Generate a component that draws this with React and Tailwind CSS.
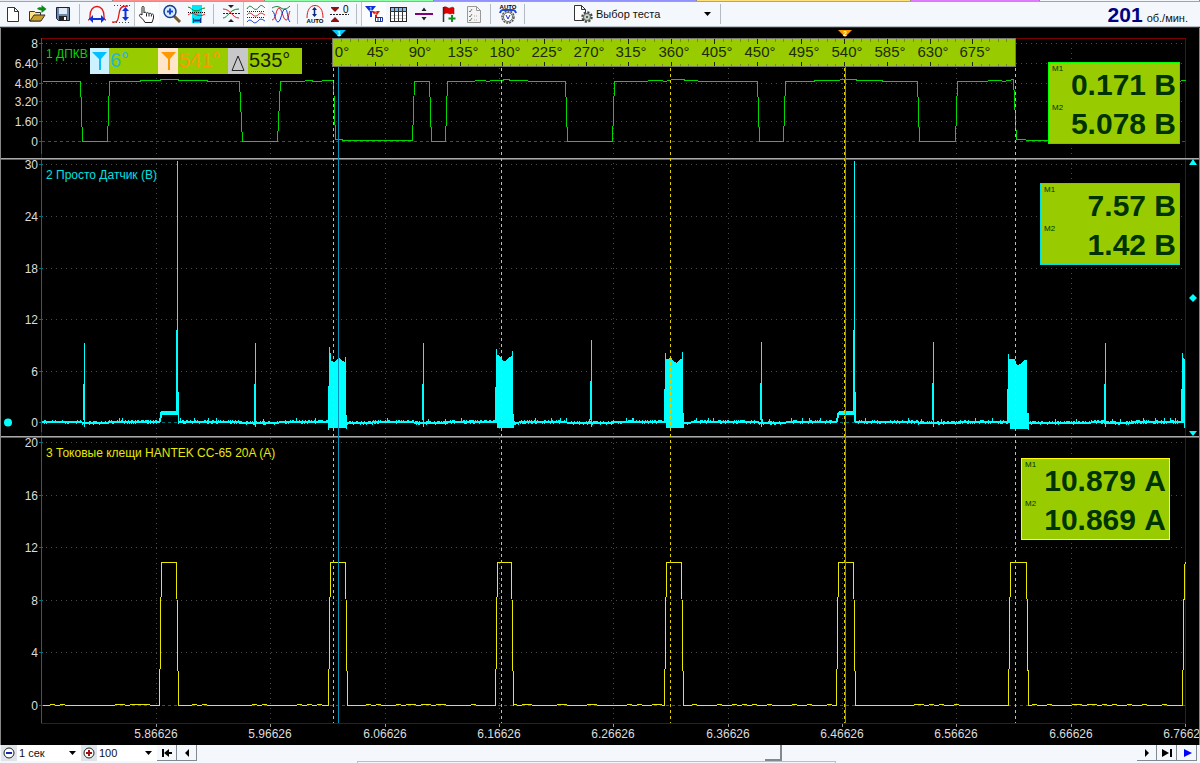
import React, { useState } from 'react';

const TABS = [
  { grow: 'grow-[113]', color: 'bg-[#e8ecf2]' },
  { grow: 'grow-[152]', color: 'bg-[#ff8f8f]' },
  { grow: 'grow-[169]', color: 'bg-[#8fffa8]' },
  { grow: 'grow-[263]', color: 'bg-[#9292ff]' },
  { grow: 'grow-[214]', color: 'bg-[#ffe07a]' },
  { grow: 'grow-[129]', color: 'bg-[#e07aff]' },
  { grow: 'grow-[160]', color: 'bg-[#f4f8fc]' },
];

const ICONS = {
  'New file': (
    <path d="M4.500 3.500h7l4 4v10h-11zM11.500 3.500v4h4" fill="#fff" stroke="#333" />
  ),
  'Open file': (
    <>
      <path d="M1.500 7.500h5l1 1h5v8.500h-11z" fill="#ffe28a" stroke="#333" />
      <path d="M2 17l4-6h11l-4 6z" fill="#c9a02c" stroke="#333" />
      <path d="M9 5c2-2.500 3-1.500 4.500-1.500V1l5 4-5 4V6.500C12 6 11 6 9 5z" fill="#0a8a1a" />
    </>
  ),
  Save: (
    <>
      <path d="M3.500 3.500h13v13h-11l-2-2z" fill="#7088a8" stroke="#14203c" />
      <rect x="6" y="4" width="8" height="6" fill="#dfe9f4" />
      <rect x="6" y="12" width="8" height="5" fill="#222" />
      <rect x="11" y="13" width="2" height="3" fill="#fff" />
    </>
  ),
  'Horizontal measure': (
    <>
      <path d="M1 16c2 0 2-2 2-4C3 6 6 2.500 10 2.500S17 6 17 12c0 2 0 4 2 4" fill="none" stroke="#e01818" strokeWidth="1.300" />
      <path d="M4 15h12" stroke="#1030d8" strokeWidth="2" />
      <path d="M6 11v8l-4-4zM14 11v8l4-4z" fill="#1030d8" />
    </>
  ),
  'Vertical measure': (
    <>
      <path d="M2 1.500h16M1 18.500h16" stroke="#444" strokeDasharray="1 2" />
      <path d="M0 18c6 1 6-2 7-8 1-7 3-8 9-8" fill="none" stroke="#e01818" strokeWidth="1.300" />
      <path d="M13.500 5v10" stroke="#1030d8" strokeWidth="2" />
      <path d="M10 7h7l-3.500-4zM10 13h7l-3.500 4z" fill="#1030d8" />
    </>
  ),
  Hand: (
    <path
      d="M5 11V3.500c0-1.500 2-1.500 2 0V9c.500-1.200 2.300-1 2.500.3.500-1 2.200-.8 2.500.5.600-.9 2.200-.6 2.400.5.700-.7 2.100-.2 2.100 1V14l-1.500 4.500H8L6.500 16 3 12.500c-1.300-1.300-.2-2.700 1-2.200zM9.500 9.500v3M12 10v2.500M14.400 10.500v2"
      fill="#fff"
      stroke="#222"
    />
  ),
  'Zoom in': (
    <>
      <path d="M12 12l6 6" stroke="#7a5a28" strokeWidth="3" />
      <circle cx="8" cy="7.500" r="6" fill="#d8ecff" stroke="#183c90" strokeWidth="1.500" />
      <path d="M8 4.500v6M5 7.500h6" stroke="#1848d0" strokeWidth="2" />
    </>
  ),
  'Fit window': (
    <>
      <rect x="5" y="1" width="10" height="18" fill="#00e8f8" />
      <path d="M1 3c3 0 4 4 8 4s5-3 9-3" fill="none" stroke="#108010" />
      <path d="M1 8.500h18" stroke="#000" strokeDasharray="1 1" />
      <path d="M1 11c4-3 6-1 9 0s5 1 8-1" fill="none" stroke="#e01818" />
      <path d="M6 16.500h8" stroke="#103090" strokeWidth="2" />
      <path d="M6.500 14v5M13.500 14v5" stroke="#103090" />
    </>
  ),
  'Zero align': (
    <>
      <path d="M2 9.500h17" stroke="#222" strokeDasharray="2 1" />
      <path d="M2 14c5 0 6-9 16-9" fill="none" stroke="#108030" />
      <path d="M2 5c8 0 9 9 16 9" fill="none" stroke="#e01818" />
      <path d="M7 1h6l-3 3zM7 18h6l-3-3z" fill="#222" />
    </>
  ),
  'Separate channels': (
    <>
      <path d="M1 5c2-4 4-3 6-1s4 2 6-1 4-1 6 1" fill="none" stroke="#108030" />
      <path d="M1 7.500h18M1 13.500h18" stroke="#222" strokeDasharray="1 1" />
      <path d="M1 11c2-3 4-2 6 0s4 1 6-1 4 0 6 1" fill="none" stroke="#e01818" />
      <path d="M1 18c2-3 4-2 6 0s4 0 6-2 4 0 6 1" fill="none" stroke="#1030d8" />
    </>
  ),
  'Overlay channels': (
    <>
      <path d="M1 4c4-2 6-2 9 0s6 1 9-2" fill="none" stroke="#108030" />
      <path d="M1 16C5 16 5 4 8 4s4 12 7 12 2-5 4-9" fill="none" stroke="#e01818" />
      <path d="M1 7c3 0 3 11 6 11S11 5 14 5s2 10 5 13" fill="none" stroke="#1030d8" />
    </>
  ),
  'Auto scale': (
    <>
      <path d="M2 14C2 6 5 1.500 10 1.500S18 6 18 14" fill="none" stroke="#e01818" />
      <path d="M9.500 4v8" stroke="#102880" strokeWidth="1.500" />
      <path d="M7 6h5L9.500 3zM7 10h5l-2.500 3z" fill="#102880" />
      <text x="10" y="19" textAnchor="middle" className="text-[6px] font-bold">AUTO</text>
    </>
  ),
  'Set zero': (
    <>
      <path d="M1 4h8l-4 4zM1 17h8l-4-4z" fill="#901010" />
      <path d="M1 3.500h8M1 17.500h8" stroke="#901010" />
      <path d="M0 10.500h19" stroke="#222" strokeDasharray="2 1" />
      <text x="13" y="9" className="text-[10px]">0</text>
    </>
  ),
  Rulers: (
    <>
      <path d="M1 2h11l-4 5v6H6V8z" fill="#1030d8" />
      <text x="5" y="7" fill="#fff" className="text-[6px]">1</text>
      <path d="M7 7h9l-3 4v5h-2v-5z" fill="#e01818" />
      <text x="10" y="11" fill="#fff" className="text-[5px]">2</text>
      <path d="M11.500 13.500h7v4h-7zM14 13.500v4M16.500 13.500v4" fill="#fff" stroke="#1830a0" />
    </>
  ),
  'Data table': (
    <>
      <rect x="1.500" y="3.500" width="16" height="14" fill="#fff" stroke="#222" />
      <path d="M2 5.500h15" stroke="#88b8e8" strokeWidth="3" />
      <path d="M2 11.500h15M2 14.500h15" stroke="#ccc" />
      <path d="M1 7.500h17M5.500 4v14M9.500 4v14M13.500 4v14" stroke="#333" />
    </>
  ),
  'Split panel': (
    <>
      <path d="M1 10h18" stroke="#800080" strokeWidth="2" />
      <path d="M7.500 7h5L10 3.500zM7.500 13h5L10 16.500z" fill="#222" />
    </>
  ),
  'Add flag': (
    <>
      <path d="M4.500 3v15" stroke="#333" strokeWidth="1.500" />
      <path d="M5 3c3-1 4 2 6 1s3-1 4 0v6c-2-1-3 0-4 0s-3-2-6 0z" fill="#e00000" stroke="#600" strokeWidth=".5" />
      <path d="M13 11v7M9.500 14.500h7" stroke="#109020" strokeWidth="2" />
    </>
  ),
  Checklist: (
    <>
      <path d="M3.500 2.500h9l4 4v12h-13zM12.500 2.500v4h4" fill="#f4f4f4" stroke="#999" />
      <path d="M5 7l1 1 2-3M5 12l1 1 2-3M5 16l1 1 2-3" fill="none" stroke="#777" />
      <path d="M10 12h4M10 16h4" stroke="#aaa" strokeDasharray="1 1" />
    </>
  ),
  'Auto time': (
    <>
      <text x="10" y="5" textAnchor="middle" className="text-[6px] font-bold">AUTO</text>
      <path d="M2 9c1-4 4-3 8-3s7-1 8 3" fill="none" stroke="#1848e0" strokeWidth="2" />
      <circle cx="10" cy="13" r="6" fill="#ddd" stroke="#555" strokeWidth="1.500" strokeDasharray="2 1" />
      <circle cx="10" cy="13" r="4.500" fill="#fff" stroke="#666" />
      <path d="M8 11l2 4 2-4" fill="none" stroke="#1830d0" />
    </>
  ),
};

const GROUPS = [
  ['New file', 'Open file', 'Save'],
  ['Horizontal measure', 'Vertical measure', 'Hand', 'Zoom in', 'Fit window'],
  ['Zero align', 'Separate channels', 'Overlay channels'],
  ['Auto scale', 'Set zero'],
  ['Rulers', 'Data table', 'Split panel', 'Add flag', 'Checklist'],
  ['Auto time'],
];

const ACTIVE = ['Hand', 'Separate channels', 'Rulers'];

const Separator = () => <div className="mx-1 h-5 w-px bg-[#b4bac2]" />;

const Toolbar = () => (
  <div className="flex h-[25px] items-center border-b border-[#b8bec6] bg-[#f4f8fc]">
    {GROUPS.map((group) => (
      <React.Fragment key={group[0]}>
        {group.map((name) => (
          <button
            key={name}
            type="button"
            aria-label={name}
            className={`flex h-6 w-[25px] shrink-0 items-center justify-center ${
              ACTIVE.includes(name) ? 'border-l border-[#c0c4ca] bg-[#fbfcfe]' : ''
            }`}
          >
            <svg viewBox="0 0 20 20" className="size-5">{ICONS[name]}</svg>
          </button>
        ))}
        <Separator />
      </React.Fragment>
    ))}
    <label className="ml-10 flex items-center gap-[3px] pl-1">
      <svg viewBox="0 0 20 20" className="size-5">
        <path d="M1.500 1.500h7l4 4v11h-11zM8.500 1.500v4h4" fill="#fff" stroke="#333" />
        <circle cx="14" cy="13" r="4.500" fill="#c8d4c4" stroke="#444" strokeWidth="2.500" strokeDasharray="2 1.500" />
        <circle cx="14" cy="13" r="3.500" fill="#c8d4c4" stroke="#566" />
        <circle cx="14" cy="13" r="1" fill="#333" />
      </svg>
      <Dropdown label="Выбор теста" options={['Выбор теста']} className="w-[120px]" />
    </label>
    <Separator />
    <div className="ml-auto flex items-baseline gap-1 pr-3 pt-1 leading-6 text-[#111]">
      <span className="text-[21px] font-bold text-[#000080]">201</span>
      <span className="text-[11px]">об./мин.</span>
    </div>
  </div>
);

const Dropdown = ({ label, options, className }) => (
  <span className={`relative flex items-center ${className}`}>
    <select aria-label={label} className="w-full appearance-none bg-transparent text-[11px] leading-4 text-[#111] outline-none">
      {options.map((o) => <option key={o}>{o}</option>)}
    </select>
    <svg viewBox="0 0 8 4" className="pointer-events-none absolute right-1 h-1 w-2">
      <path d="M0 0h7L3.500 4z" fill="#000" />
    </svg>
  </span>
);

const GRID_X = [156, 270, 385, 499, 613, 728, 842, 956, 1071, 1185];
const TIMES = ['5.86626', '5.96626', '6.06626', '6.16626', '6.26626', '6.36626', '6.46626', '6.56626', '6.66626', '6.76626'];

const AXES = [
  [[43, '8'], [63, '6.40'], [83, '4.80'], [101, '3.20'], [121, '1.60'], [141, '0']],
  [[164, '30'], [216, '24'], [268, '18'], [319, '12'], [371, '6'], [422, '0']],
  [[442, '20'], [495, '16'], [547, '12'], [600, '8'], [652, '4'], [705, '0']],
];

// pseudo random, so the noise stays the same between renders
const noise = (x) => {
  const v = Math.sin(x * 12.9898) * 43758.5453;
  return v - Math.floor(v);
};

const CRANK =
  'M42 81H80L82 141H107L109 81H139L141 80H158L162 79H176L180 80H205L209 81H239L242 141H277L280 81H303L306 80H310L314 81H318L325 80H333' +
  'L335 139H341L343 140H412L414 81H429L431 141H445L447 81H473L476 80H484L487 81L492 80H500L506 79L512 80H525L530 81H565L567 141H612L614 81H645L650 80H660' +
  'L665 81L672 79H682L686 80H695L700 81H757L759 141H783L785 81H812L816 80H835L845 79H854L858 80H880L884 81H917L919 141H955L957 81H985L990 80H1000L1003 81L1013 79' +
  'L1016 139H1023L1028 140H1050L1100 141L1102 81H1179L1182 80H1185';

const SPIKES = [[84, 343], [255, 343], [423, 343], [591, 340], [761, 342], [933, 342], [1105, 343]];

const BURSTS = [
  'M328 430V386H329V347H330V353H331V361L334 362L337 359L339 358L342 361L345 362V357H346V415H347V430L346 429V428H329V430z',
  'M495 422V387H496V349H497V355L500 356L503 361L506 361L509 357L512 356V351H513V414H514V428H497V422z',
  'M664 422V389H665V353H666V359L668 359L671 357L674 362L677 363L680 359H682V352H683V413H684V428H666V422z',
  'M1007 422V389H1008V354H1009V359H1015L1017 365L1021 364L1024 360H1027V413H1029V430L1027 429H1010V422z',
  'M1181 422V389H1182V353H1183V358L1185 359V428H1184V422z',
];

const SAGS = [[82, 108], [240, 278], [336, 372], [414, 447], [513, 518], [567, 612], [683, 690], [758, 785], [918, 957], [1029, 1090], [1105, 1130]];

const sensorBaseline = () => {
  const parts = [];
  for (let x = 42; x < 1185; x += 1) {
    if ((x >= 160 && x < 178) || (x >= 837 && x < 855)) continue;
    const sag = SAGS.some(([a, b]) => x >= a && x <= b) ? 1 : 0;
    const n = noise(x);
    const top = 420 + sag + (n > 0.6 ? 0 : 1) - (n > 0.95 ? 2 : 0);
    parts.push(`M${x}.5 ${top}V${423 + sag + (noise(x + 0.5) > 0.8 ? 1 : 0)}`);
  }
  return parts.join('');
};

const PULSES = [[159, 161, 176, 178], [328, 330, 345, 347], [495, 497, 511, 513], [664, 666, 681, 683], [836, 838, 853, 855], [1008, 1010, 1026, 1028]];

const clampTrace = () => {
  let d = 'M42 705';
  let x = 42;
  const flat = (to) => {
    for (; x < to; x += 5) {
      d += `L${x} ${noise(x) > 0.7 ? 704 : 705}`;
    }
  };
  PULSES.forEach(([a, b, c, e]) => {
    flat(a);
    d += `L${a} 705L${b} 562H${c}L${e} 705`;
    x = e + 1;
  });
  flat(1182);
  return `${d}L1182 705L1184 565L1185 562`;
};

const RULER_X = [333, 375, 417, 460, 502, 544, 586, 628, 671, 714, 757, 801, 844, 887, 930, 972, 1015];

const Ruler = () => (
  <g>
    <rect x="332.5" y="38.5" width="683" height="28" fill="#99cc00" stroke="#77776a" />
    {RULER_X.slice(0, 16).map((x, i) => {
      const step = (RULER_X[i + 1] - x) / 5;
      return (
        <g key={x}>
          {i > 0 && <path d={`M${x}.5 39v5M${x}.5 62v4`} stroke="#1c2a00" />}
          {[1, 2, 3, 4].map((k) => {
            const mx = Math.round(x + step * k) + 0.5;
            return <path key={k} d={`M${mx} 39v3M${mx} 64v2`} stroke="#6f9210" />;
          })}
          <text x={i === 0 ? 342 : x + 3} y="57" textAnchor="middle" fill="#1c2a00" className="text-[15px]">
            {i * 45}°
          </text>
        </g>
      );
    })}
  </g>
);

const Chart = () => (
  <svg viewBox="0 28 1200 717" className="block h-auto w-full" role="img" aria-label="Осциллограмма" shapeRendering="crispEdges">
    <rect x="0" y="28" width="1200" height="717" fill="#000" />

    {/* grid */}
    <g stroke="#4a4a4a" strokeDasharray="1 4">
      {AXES.flat().map(([y, label]) => label !== '0' && <path key={y} d={`M46 ${y}.5H1185`} />)}
      {GRID_X.slice(0, 9).map((x) => <path key={x} d={`M${x}.5 43V723`} />)}
    </g>
    <g stroke="#006a70" strokeDasharray="3 3">
      {[141, 422, 705].map((y) => <path key={y} d={`M42 ${y}.5H1185`} />)}
    </g>
    <path d="M41 38.500H1185.500V723.500H41" fill="none" stroke="#780000" />
    <path d="M41.500 38V723" stroke="#00707c" />
    <path d="M41.500 154V158M41.500 432V436" stroke="#780000" />

    {/* axis labels */}
    <g fill="#dcdcdc" className="text-[12px]">
      {AXES.flat().map(([y, label]) => (
        <g key={y}>
          <text x="38" y={y + 5} textAnchor="end">{label}</text>
          <path d={`M39 ${y}.5h4`} stroke="#00707c" />
        </g>
      ))}
      {GRID_X.map((x, i) => (
        <g key={x}>
          <text x={x} y="738" textAnchor="middle">{TIMES[i]}</text>
          <path d={`M${x}.5 724v3`} stroke="#999" />
        </g>
      ))}
    </g>

    {/* traces */}
    <path d={CRANK} transform="translate(.5 .5)" fill="none" stroke="#00d800" />
    <g fill="#00ffff" stroke="none">
      <path d={sensorBaseline()} stroke="#00ffff" />
      <path d="M159 423L160 413L161 411H176V330H177V161H178V392H179V422H178V415H162L161 422z" />
      <path d="M836 423L837 413L839 411H853V330H854V161H855V392H856V422H854V415H839L838 422z" />
      {SPIKES.map(([x, top]) => (
        <g key={x}>
          <rect x={x} y={top} width="1" height={427 - top} />
          <rect x={x - 1} y={top + 41} width="1" height={420 - top - 41} />
        </g>
      ))}
      {BURSTS.map((d) => <path key={d} d={d} />)}
    </g>
    <path d={clampTrace()} transform="translate(.5 .5)" fill="none" stroke="#e8e800" />

    {/* panel borders */}
    {[158, 436].map((y) => (
      <g key={y}>
        <path d={`M0 ${y}.5H1200`} stroke="#a8a8a8" />
        <path d={`M0 ${y + 1}.5H1200`} stroke="#606060" />
      </g>
    ))}

    {/* cursors */}
    <g stroke="#e0d000" strokeDasharray="3 3">
      {[333, 501, 670, 844, 1015].map((x) => <path key={x} d={`M${x}.5 38V723`} />)}
    </g>
    <path d="M338.500 38V723" stroke="#0090b8" />
    <path d="M845.500 38V723" stroke="#c87800" />
    <Ruler />
    <g shapeRendering="auto">
      <path d="M332 30h14l-7 7z" fill="#00c8ff" />
      <path d="M838 30h14l-7 7z" fill="#ff9800" />
      <text x="337" y="36" fill="#fff" className="text-[7px] font-bold">1</text>
      <text x="843" y="36" fill="#fff" className="text-[7px] font-bold">2</text>
      <g fill="#00ffff">
        <circle cx="8" cy="422.5" r="4" />
        <path d="M1189 165h8l-4-6z" />
        <path d="M1189 298l4-4 4 4-4 4z" />
        <path d="M1189 431h8l-4 5z" />
      </g>
    </g>

    {/* channel names */}
    <g className="text-[12px]">
      <text x="46" y="58" fill="#00d800">1 ДПКВ</text>
      <text x="46" y="179" fill="#00e0e0">2 Просто Датчик (В)</text>
      <text x="46" y="457" fill="#e8e800">3 Токовые клещи HANTEK CC-65 20A (A)</text>
    </g>
    <path d="M.5 28V745" stroke="#888" />
    <path d="M1199.500 28V745" stroke="#888" />
  </svg>
);

const AnglePanel = () => (
  <div className="absolute left-[90px] top-5 flex h-[26px] bg-[#99cc00] text-[20px] leading-6">
    <svg viewBox="0 0 19 26" className="w-[19px] bg-[#ccf2ff]">
      <path d="M2 4h15l-6 7v11H9V11z" fill="#00c0ff" />
    </svg>
    <span className="w-[49px] pl-px text-[#20b8d8]">6°</span>
    <svg viewBox="0 0 20 26" className="w-5 bg-[#ffe6c8]">
      <path d="M3 4h15l-6 7v11h-2V11z" fill="#ff9800" />
    </svg>
    <span className="w-[50px] pl-px text-[#ff9800]">541°</span>
    <svg viewBox="0 0 20 26" className="w-5 bg-[#c8c8c8]">
      <path d="M4 22.500L10 8l6 14.500z" fill="none" stroke="#222" />
    </svg>
    <span className="w-[54px] pl-px text-[#141e00]">535°</span>
  </div>
);

const Readout = ({ m1, m2, className }) => (
  <div className={`absolute border bg-[#99cc00] pt-0.5 text-[#003300] ${className}`}>
    {[['M1', m1], ['M2', m2]].map(([name, value]) => (
      <div key={name} className="flex justify-between px-[3px]">
        <span className="text-[8px] leading-[8px]">{name}</span>
        <span className="text-[30px] font-bold leading-[39px]">{value}</span>
      </div>
    ))}
  </div>
);

const NavButton = ({ label, path, color = '#000' }) => (
  <button
    type="button"
    aria-label={label}
    className="flex h-4 w-5 items-center justify-center border-b border-r border-[#808890] bg-[#f4f8fc]"
  >
    <svg viewBox="0 0 10 8" className="h-2 w-2.5"><path d={path} fill={color} /></svg>
  </button>
);

const ScaleButton = ({ label, path, color }) => (
  <button type="button" aria-label={label} className="flex h-4 w-4 items-center justify-center bg-[#dfe4ea]">
    <svg viewBox="0 0 12 12" className="size-3">
      <circle cx="6" cy="6" r="5" fill="#fff" stroke="#222" />
      <path d={path} stroke={color} strokeWidth="2" />
    </svg>
  </button>
);

const BottomBar = () => {
  const [position, setPosition] = useState(615);

  return (
    <div className="flex h-[18px] items-start bg-[#f4f8fc] pl-px pr-[3px]">
      <ScaleButton label="Уменьшить" path="M3 6h6" color="#1828b0" />
      <Dropdown label="Время" options={['1 сек']} className="h-4 w-16 bg-white pl-0.5" />
      <ScaleButton label="Увеличить" path="M3 6h6M6 3v6" color="#a01010" />
      <Dropdown label="Масштаб" options={['100']} className="h-4 w-[60px] bg-white pl-0.5" />
      <NavButton label="В начало" path="M0 0h2v8H0zM2 4l5-4v3h3v2H7v3z" />
      <NavButton label="Назад" path="M3 4l4-4v8z" />
      <div className="grow">
        <input
          type="range"
          aria-label="Позиция"
          min="0"
          max="1000"
          value={position}
          onChange={(e) => setPosition(Number(e.target.value))}
          className="block h-4 w-full appearance-none bg-transparent [&::-webkit-slider-thumb]:h-4 [&::-webkit-slider-thumb]:w-[17px] [&::-webkit-slider-thumb]:appearance-none [&::-webkit-slider-thumb]:border-b-2 [&::-webkit-slider-thumb]:border-r-2 [&::-webkit-slider-thumb]:border-[#808890] [&::-webkit-slider-thumb]:bg-[#f4f8fc]"
        />
        <div className="ml-[17%] h-0.5 w-[51%] border-x border-t border-[#b8bec6]" />
      </div>
      <NavButton label="Вперёд" path="M3 0l4 4-4 4z" />
      <NavButton label="В конец" path="M0 0l7 4-7 4zM8 0h2v8H8z" />
      <NavButton label="Пуск" path="M2 0l8 4-8 4z" color="#0000ff" />
    </div>
  );
};

const App = () => (
  <div className="bg-[#f4f8fc] font-['Liberation_Sans',Arial,sans-serif]">
    <div className="flex h-0.5 border-b border-[#a0a4aa]">
      {TABS.map((t) => <div key={t.color} className={`${t.grow} ${t.color} border-r border-[#888]`} />)}
    </div>
    <Toolbar />
    <div className="h-px bg-[#30343c]" />
    <div className="relative">
      <Chart />
      <AnglePanel />
      <Readout m1="0.171 В" m2="5.078 В" className="right-5 top-[34px] w-[132px] border-[#00ff00]" />
      <Readout m1="7.57 В" m2="1.42 В" className="right-5 top-[155px] w-[140px] border-[#00e0e0]" />
      <Readout m1="10.879 А" m2="10.869 А" className="right-[30px] top-[430px] w-[149px] border-[#ffff00]" />
    </div>
    <BottomBar />
  </div>
);

export default App;
